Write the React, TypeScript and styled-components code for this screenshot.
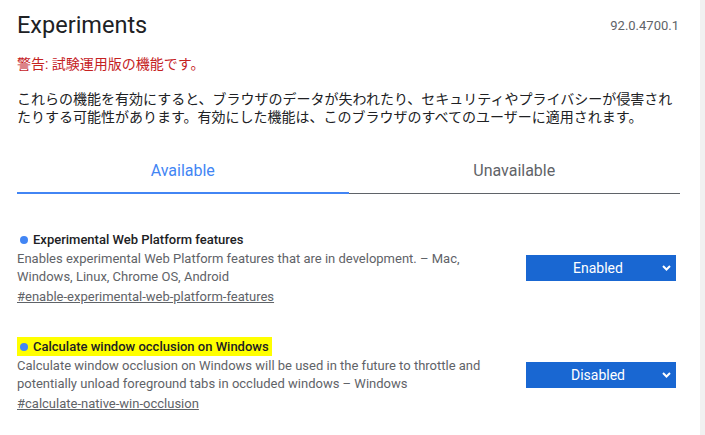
import styled, { createGlobalStyle } from 'styled-components';

const GlobalStyle = createGlobalStyle`
    html, body {
        margin: 0;
        padding: 0;
        background: #fff;
    }
    body {
        font-family: Roboto, "Noto Sans CJK JP", "Liberation Sans", sans-serif;
        color: #202124;
    }
`;

interface Feature {
    name: string
    description: string
    link: string
    state: string
    highlighted?: boolean
}

const features: Feature[] = [
    {
        name: 'Experimental Web Platform features',
        description: 'Enables experimental Web Platform features that are in development. – Mac, Windows, Linux, Chrome OS, Android',
        link: '#enable-experimental-web-platform-features',
        state: 'Enabled',
    },
    {
        name: 'Calculate window occlusion on Windows',
        description: 'Calculate window occlusion on Windows will be used in the future to throttle and potentially unload foreground tabs in occluded windows – Windows',
        link: '#calculate-native-win-occlusion',
        state: 'Disabled',
        highlighted: true,
    },
];

const Chevron = () => (
    <svg width="9" height="6" viewBox="0 0 9 6">
        <path d="M1 1 L4.5 4.5 L8 1" fill="none" stroke="#fff" strokeWidth="2" />
    </svg>
);

const App: React.FC = () => {
    return (
        <Shell>
            <GlobalStyle />
            <Page>
                <Header>
                    <Title>Experiments</Title>
                    <Version>92.0.4700.1</Version>
                </Header>

                <Warning>警告: 試験運用版の機能です。</Warning>

                <Intro>
                    これらの機能を有効にすると、ブラウザのデータが失われたり、セキュリティやプライバシーが侵害されたりする可能性があります。有効にした機能は、このブラウザのすべてのユーザーに適用されます。
                </Intro>

                <TabBar>
                    <Tab active>Available</Tab>
                    <Tab>Unavailable</Tab>
                </TabBar>

                <FeatureList>
                    {features.map(feature => (
                        <FeatureRow key={feature.link}>
                            <FeatureText>
                                <FeatureName highlighted={feature.highlighted}>
                                    <Dot />
                                    {feature.name}
                                </FeatureName>
                                <Description>{feature.description}</Description>
                                <Permalink href={feature.link}>{feature.link}</Permalink>
                            </FeatureText>
                            <SelectBox>
                                <SelectLabel>{feature.state}</SelectLabel>
                                <Chevron />
                            </SelectBox>
                        </FeatureRow>
                    ))}
                </FeatureList>
            </Page>
            <ScrollTrack />
        </Shell>
    )
}

const Shell = styled.div`
    display: flex;
    min-height: 435px;
`;

const Page = styled.main`
    flex: 1;
    padding: 0 20px 0 17px;
    overflow: hidden;
`;

const ScrollTrack = styled.div`
    width: 5px;
    background: #f1f1f1;
`;

const Header = styled.header`
    display: flex;
    justify-content: space-between;
    align-items: center;
    height: 28px;
    padding-top: 11px;
`;

const Title = styled.h1`
    margin: 0;
    font-size: 23.5px;
    font-weight: 400;
    color: #202124;
`;

const Version = styled.span`
    font-size: 13px;
    color: #5f6368;
    padding-right: 1px;
`;

const Warning = styled.p`
    margin: 16px 0 0;
    font-size: 14px;
    line-height: 18px;
    color: #c5221f;
`;

const Intro = styled.p`
    margin: 17px 0 0;
    font-size: 14px;
    line-height: 18px;
    color: #202124;
`;

const TabBar = styled.nav`
    display: flex;
    margin-top: 23px;
    border-bottom: 1px solid #5f6368;
`;

const Tab = styled.div<{ active?: boolean }>`
    flex: 1;
    height: 43px;
    display: flex;
    align-items: center;
    justify-content: center;
    font-size: 16px;
    color: ${props => props.active ? '#4285f4' : '#5f6368'};
    border-bottom: 2px solid ${props => props.active ? '#4285f4' : 'transparent'};
    margin-bottom: -1px;
`;

const FeatureList = styled.section`
    display: flex;
    flex-direction: column;
    gap: 31px;
    padding-top: 36px;
`;

const FeatureRow = styled.div`
    display: flex;
    align-items: center;
    justify-content: space-between;
`;

const FeatureText = styled.div`
    flex: 0 1 480px;
    display: flex;
    flex-direction: column;
    align-items: flex-start;
`;

const FeatureName = styled.h2<{ highlighted?: boolean }>`
    margin: 0;
    display: inline-flex;
    align-items: center;
    padding: 0 3px;
    height: 19px;
    font-size: 13px;
    font-weight: 500;
    color: #202124;
    background: ${props => props.highlighted ? '#ffff00' : 'transparent'};
`;

const Dot = styled.span`
    width: 8px;
    height: 8px;
    border-radius: 50%;
    background: #4285f4;
    margin-right: 5px;
`;

const Description = styled.p`
    margin: 1px 0 0;
    font-size: 13px;
    line-height: 18px;
    color: #5f6368;
`;

const Permalink = styled.a`
    margin-top: 2px;
    font-size: 13px;
    line-height: 18px;
    color: #5f6368;
    text-decoration: underline;
`;

const SelectBox = styled.div`
    display: flex;
    align-items: center;
    width: 150px;
    height: 26px;
    box-sizing: border-box;
    padding: 0 5px 0 8px;
    margin-right: 4px;
    background: #1967d2;
    color: #fff;
`;

const SelectLabel = styled.span`
    flex: 1;
    text-align: center;
    font-size: 14px;
`;

export default App
